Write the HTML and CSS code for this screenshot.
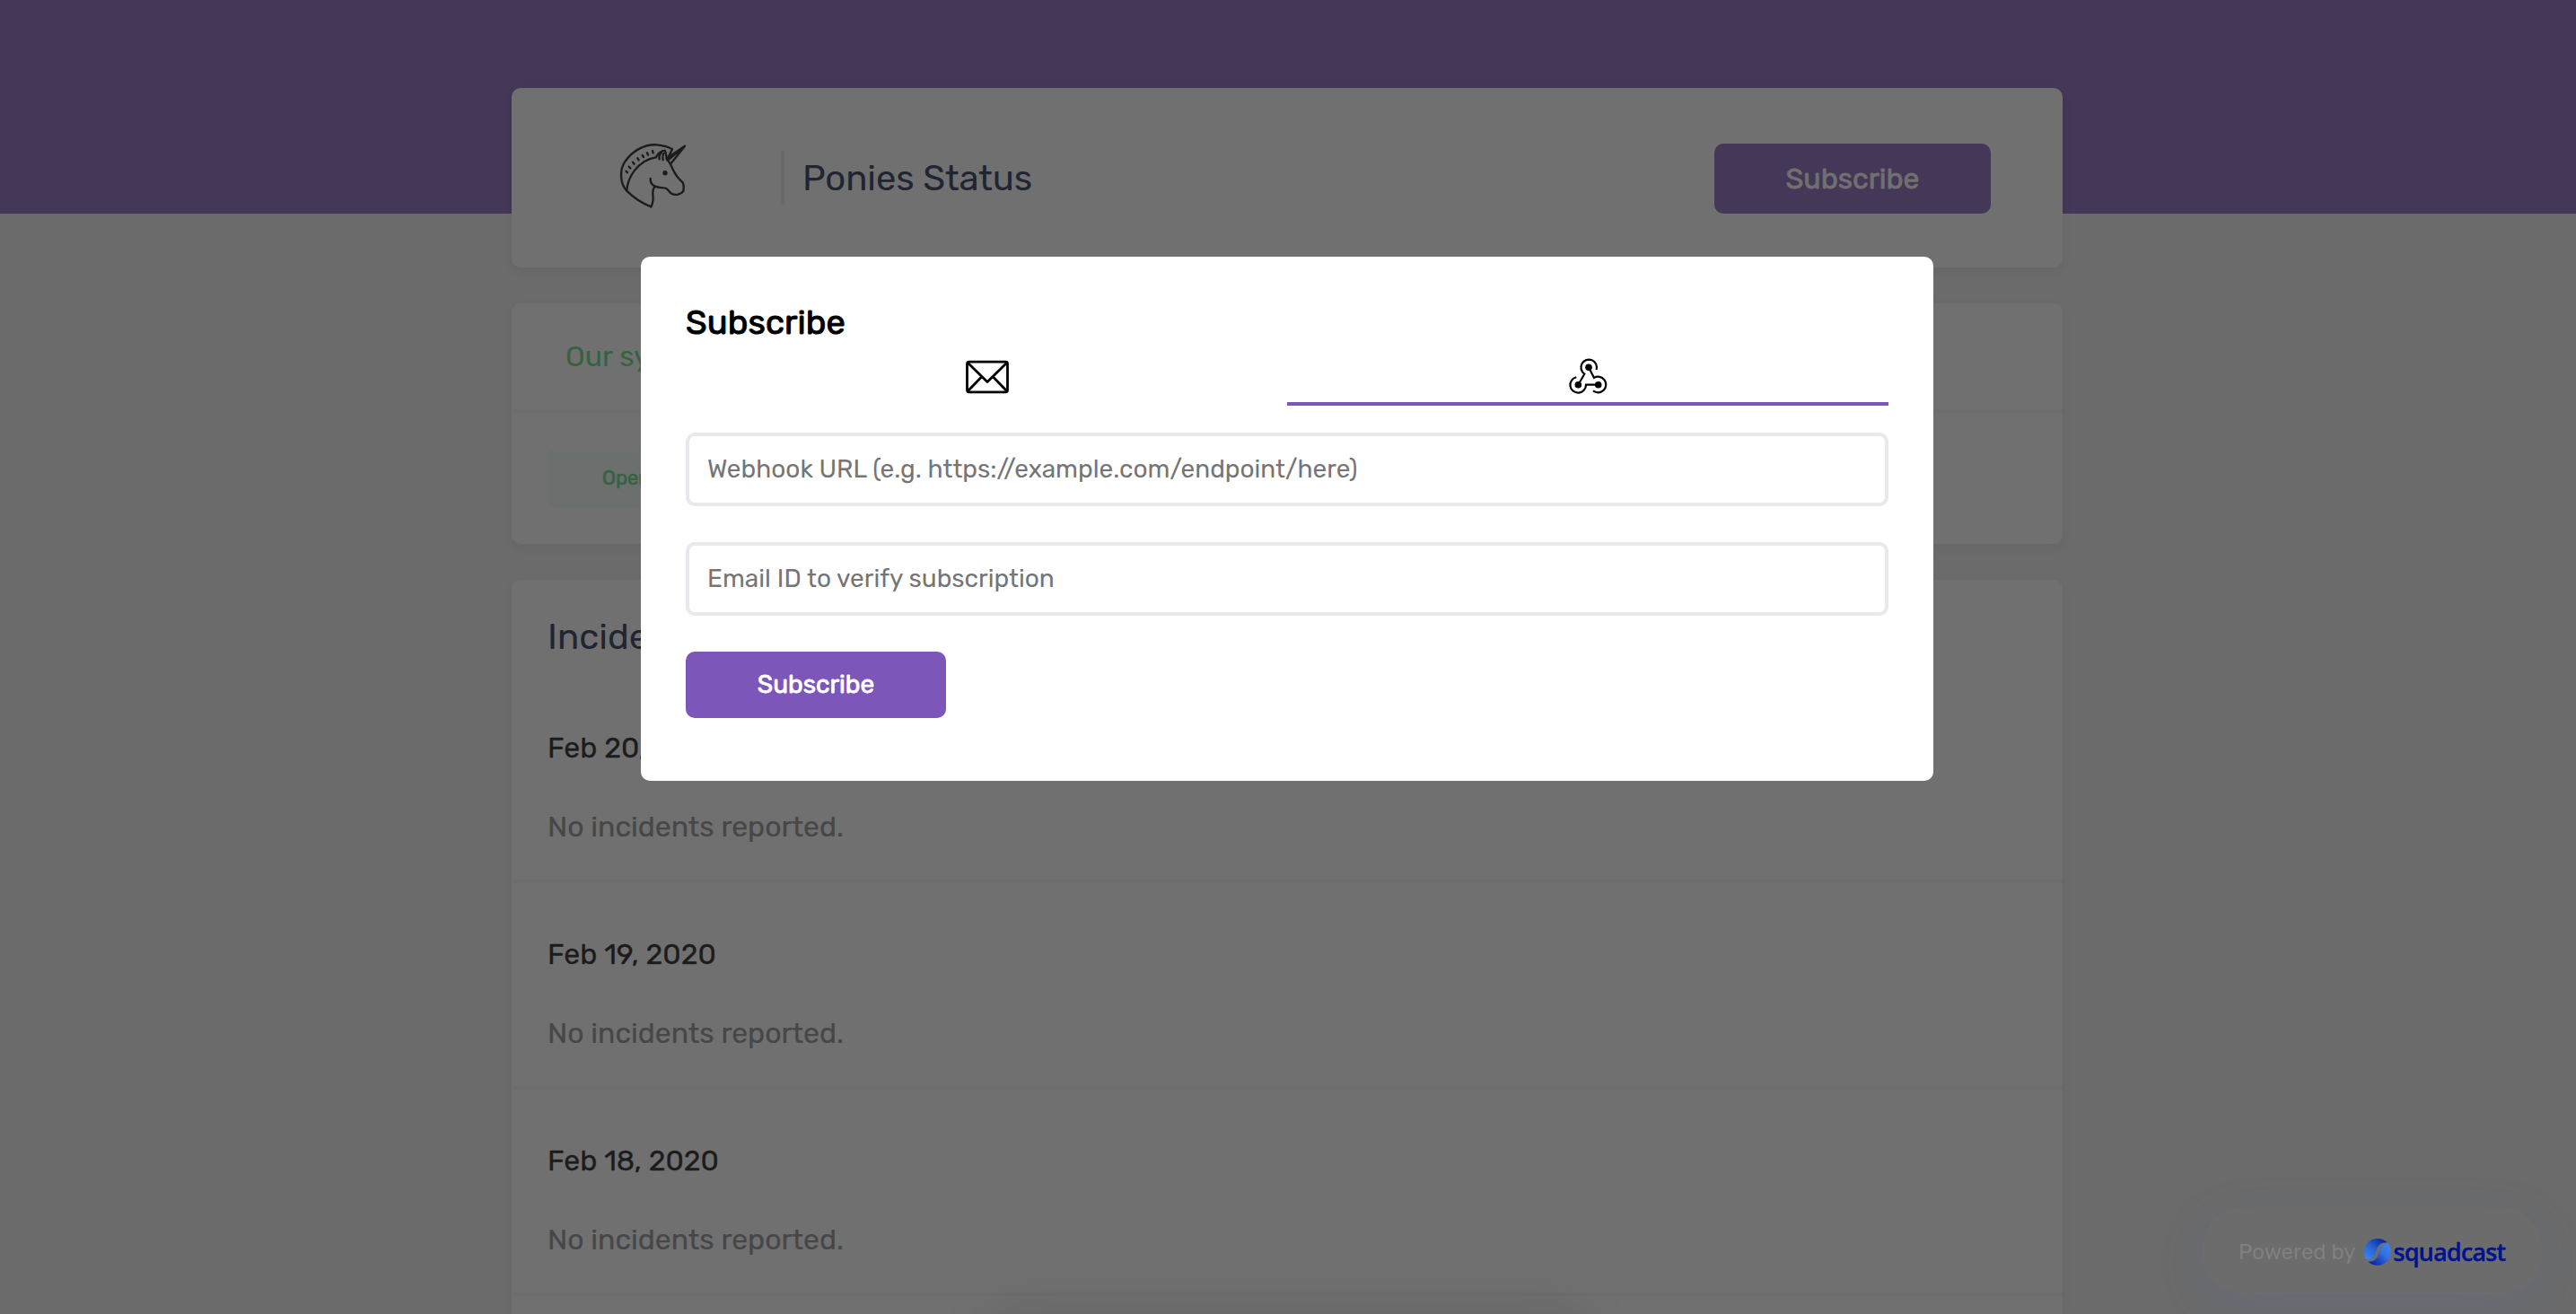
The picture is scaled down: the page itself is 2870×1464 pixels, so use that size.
FILE: index.html
```html
<!DOCTYPE html>
<html lang="en">
<head>
<meta charset="utf-8">
<title>Ponies Status</title>
<link rel="stylesheet" href="styles.css">
</head>
<body>
<main class="page">
  <header class="card header">
    <svg class="unicorn" viewBox="0 24 390 360" fill="none" stroke="#1c1c1c" stroke-width="7" stroke-linecap="round" stroke-linejoin="round">
      <path d="M115 248C90 222 92 175 108 152C135 110 180 91 215 94C240 96 258 103 267 109L250 143"/>
      <path d="M196 301C165 289 135 268 115 248C117 205 150 146 212 136C219 124 228 114 242 113C248 122 247 134 248 142C260 152 264 166 272 182C282 202 292 211 302 220C306 229 306 240 304 249C296 260 278 264 266 258C257 254 255 245 247 240C236 236 222 239 210 233C198 228 193 219 194 207"/>
      <path d="M208 234C196 248 206 268 202 283C201 291 199 296 196 301"/>
      <path d="M224 142C222 132 225 124 231 120M236 144C234 136 235 128 239 122M250 138L309 98L263 156M309 98L253 145"/>
      <path d="M113 182L117 187M122 167L127 172M135 152L140 158M151 139L155 145M167 129L171 135M183 121L186 128M201 114L203 121"/>
      <circle cx="243" cy="188" r="4.5" fill="#1c1c1c"/>
    </svg>
    <span class="divider"></span>
    <h1 class="title">Ponies Status</h1>
    <button class="header-button">Subscribe</button>
  </header>

  <section class="card">
    <div class="summary">Our systems are operational</div>
    <div class="components"><span class="state">Operational</span></div>
  </section>

  <section class="card incidents">
    <h2 class="heading">Incidents</h2>
    <article class="day"><h3 class="date">Feb 20, 2020</h3><p class="note">No incidents reported.</p></article>
    <article class="day"><h3 class="date">Feb 19, 2020</h3><p class="note">No incidents reported.</p></article>
    <article class="day"><h3 class="date">Feb 18, 2020</h3><p class="note">No incidents reported.</p></article>
  </section>
</main>

<div class="toast"></div>

<footer class="powered">
  <span class="powered-label">Powered by</span>
  <svg class="logo" viewBox="0 0 30 30">
    <defs>
      <linearGradient id="light" x1="1" y1="0" x2="0" y2="1"><stop offset="0" stop-color="#3f86f2"/><stop offset=".4" stop-color="#3470e0"/><stop offset="1" stop-color="#001390"/></linearGradient>
      <linearGradient id="left" x1="0" y1="1" x2="1" y2="0"><stop offset="0" stop-color="#3f88f5"/><stop offset=".45" stop-color="#2a62d4"/><stop offset="1" stop-color="#001390"/></linearGradient>
    </defs>
    <path fill="url(#left)" d="M25.500 4.300A15 15 0 0 0 2.300 23C8.500 24.500 11 21.500 12.800 15.500C14.500 9.500 16.500 4 25.500 4.300Z"/>
    <path fill="url(#light)" d="M26.500 5.400A15 15 0 0 1 4.500 25.700C12.500 26 14.800 21.500 16.600 15.500C18.200 10 19.800 4.800 26.500 5.400Z"/>
  </svg>
  <span class="brand">squadcast</span>
</footer>

<div class="overlay">
  <div class="modal">
    <h2 class="modal-title">Subscribe</h2>
    <div class="tabs">
      <div class="tab">
        <svg class="icon" viewBox="0 0 48 48" fill="none" stroke="#000" stroke-width="2.800" stroke-linejoin="round">
          <rect x="2.500" y="7.200" width="45" height="33.600" rx="2"/>
          <path d="M3 8L25 29.500L47 8M3 40L18.500 24M47 40L31.500 24"/>
        </svg>
      </div>
      <div class="tab active">
        <svg class="icon" viewBox="0 0 48 48" fill="none" stroke="#000" stroke-width="2.200">
          <path d="M13.300 32.700L20.300 20.700A8.800 8.800 0 1 1 33.600 16"/>
          <path d="M11.300 24.200A8.800 8.800 0 1 0 22 32.700H35.700"/>
          <path d="M25 13.300L31 24.900A8.800 8.800 0 1 1 30 39.400"/>
          <g fill="#000" stroke="none"><circle cx="25" cy="13.300" r="3.800"/><circle cx="13.300" cy="32.700" r="3.800"/><circle cx="35.700" cy="32.700" r="3.800"/></g>
        </svg>
      </div>
    </div>
    <form class="form">
      <input class="field" type="text" placeholder="Webhook URL (e.g. https://example.com/endpoint/here)">
      <input class="field" type="text" placeholder="Email ID to verify subscription">
      <button class="submit" type="button">Subscribe</button>
    </form>
  </div>
</div>
</body>
</html>
```
FILE: styles.css
```css
* { box-sizing: border-box; margin: 0; }
body {
  height: 1464px;
  overflow: hidden;
  font-family: Rubik, Roboto, sans-serif;
  background: linear-gradient(#443757 238px, #6b6b6b 238px);
}
h1, h2, h3 { font-weight: 400; }
button { border: 0; font-family: inherit; }

.page {
  display: flex;
  flex-direction: column;
  gap: 40px;
  width: 1728px;
  height: 1464px;
  margin-left: 570px;
  padding-top: 98px;
}
.card {
  background: #707070;
  border-radius: 10px;
  box-shadow: 0 4px 12px rgba(0, 0, 0, .05);
}
.header {
  display: flex;
  flex: none;
  align-items: center;
  height: 200px;
  padding: 0 80px 0 90px;
}
.unicorn { width: 130px; height: 120px; }
.divider { width: 4px; height: 60px; margin-left: 80px; background: #696969; }
.title { margin-left: 20px; font-size: 40px; letter-spacing: -.1px; color: #1f2532; }
.header-button {
  width: 308px;
  height: 78px;
  margin: 2px 0 0 auto;
  border-radius: 10px;
  background: #443757;
  color: #707070;
  font-size: 32px;
  -webkit-text-stroke: .8px;
}
.summary {
  height: 122px;
  padding-left: 60px;
  border-bottom: 4px solid #6d6d6d;
  line-height: 118px;
  font-size: 32px;
  color: #37623f;
}
.components { display: flex; padding: 40px; }
.state {
  padding: 0 61px;
  border-radius: 10px;
  background: #6b6f6e;
  line-height: 66px;
  font-size: 22px;
  color: #37623f;
  -webkit-text-stroke: .6px;
}
.incidents { flex: 1 0 0; padding-top: 40px; border-radius: 10px 10px 0 0; }
.heading {
  margin: 0 0 20px 40px;
  line-height: 48px;
  font-size: 40px;
  color: #1f2532;
}
.day {
  display: grid;
  gap: 48px;
  padding: 59px 40px 39px;
  border-bottom: 4px solid #6d6d6d;
  font-size: 32px;
  line-height: 40px;
}
.date { font-size: 32px; color: #1c1c1c; -webkit-text-stroke: .3px; }
.note { letter-spacing: -.03px; color: #464748; -webkit-text-stroke: .2px; }

.toast {
  position: fixed;
  left: 1110px;
  top: 1474px;
  width: 650px;
  height: 80px;
  box-shadow: 0 0 70px rgba(0, 0, 0, .14);
}
.powered {
  position: fixed;
  left: 2453px;
  top: 1345px;
  display: flex;
  align-items: center;
  width: 380px;
  height: 97px;
  padding: 3px 0 0 41px;
  border-radius: 48px;
  background: #6c6c6c;
  box-shadow: 0 14px 50px rgba(90, 110, 165, .2);
}
.powered-label { font-size: 24px; color: #808080; }
.logo { width: 30px; height: 30px; margin-left: 9px; }
.brand {
  margin: -1px 0 0 3px;
  font: 600 27px "Open Sans", sans-serif;
  letter-spacing: -.85px;
  color: #001390;
  -webkit-text-stroke: .4px;
}

.overlay {
  position: fixed;
  inset: 0;
  display: flex;
  align-items: flex-start;
  justify-content: center;
  padding: 286px 2px 0 0;
}
.modal {
  width: 1440px;
  height: 584px;
  padding: 53px 50px 70px;
  border-radius: 10px;
  background: #fff;
}
.modal-title {
  line-height: 40px;
  font-size: 38px;
  letter-spacing: .1px;
  color: #000;
  -webkit-text-stroke: 1px;
}
.tabs { display: flex; }
.tab {
  display: flex;
  flex: 1;
  justify-content: center;
  height: 73px;
  padding-top: 17px;
  border-bottom: 4px solid transparent;
}
.active { border-color: #7c57b9; }
.icon { width: 48px; height: 48px; overflow: visible; }
.form { display: flex; flex-direction: column; gap: 40px; margin-top: 30px; }
.field {
  height: 82px;
  padding: 0 20px 2px;
  border: 4px solid #e8e8ed;
  border-radius: 10px;
  font: 28px Rubik, Roboto, sans-serif;
}
.field::placeholder { color: #757575; }
.submit {
  width: 290px;
  height: 74px;
  padding-bottom: 2px;
  border-radius: 10px;
  background: #7c57b9;
  color: #fff;
  font-size: 28px;
  -webkit-text-stroke: .8px;
}
```
